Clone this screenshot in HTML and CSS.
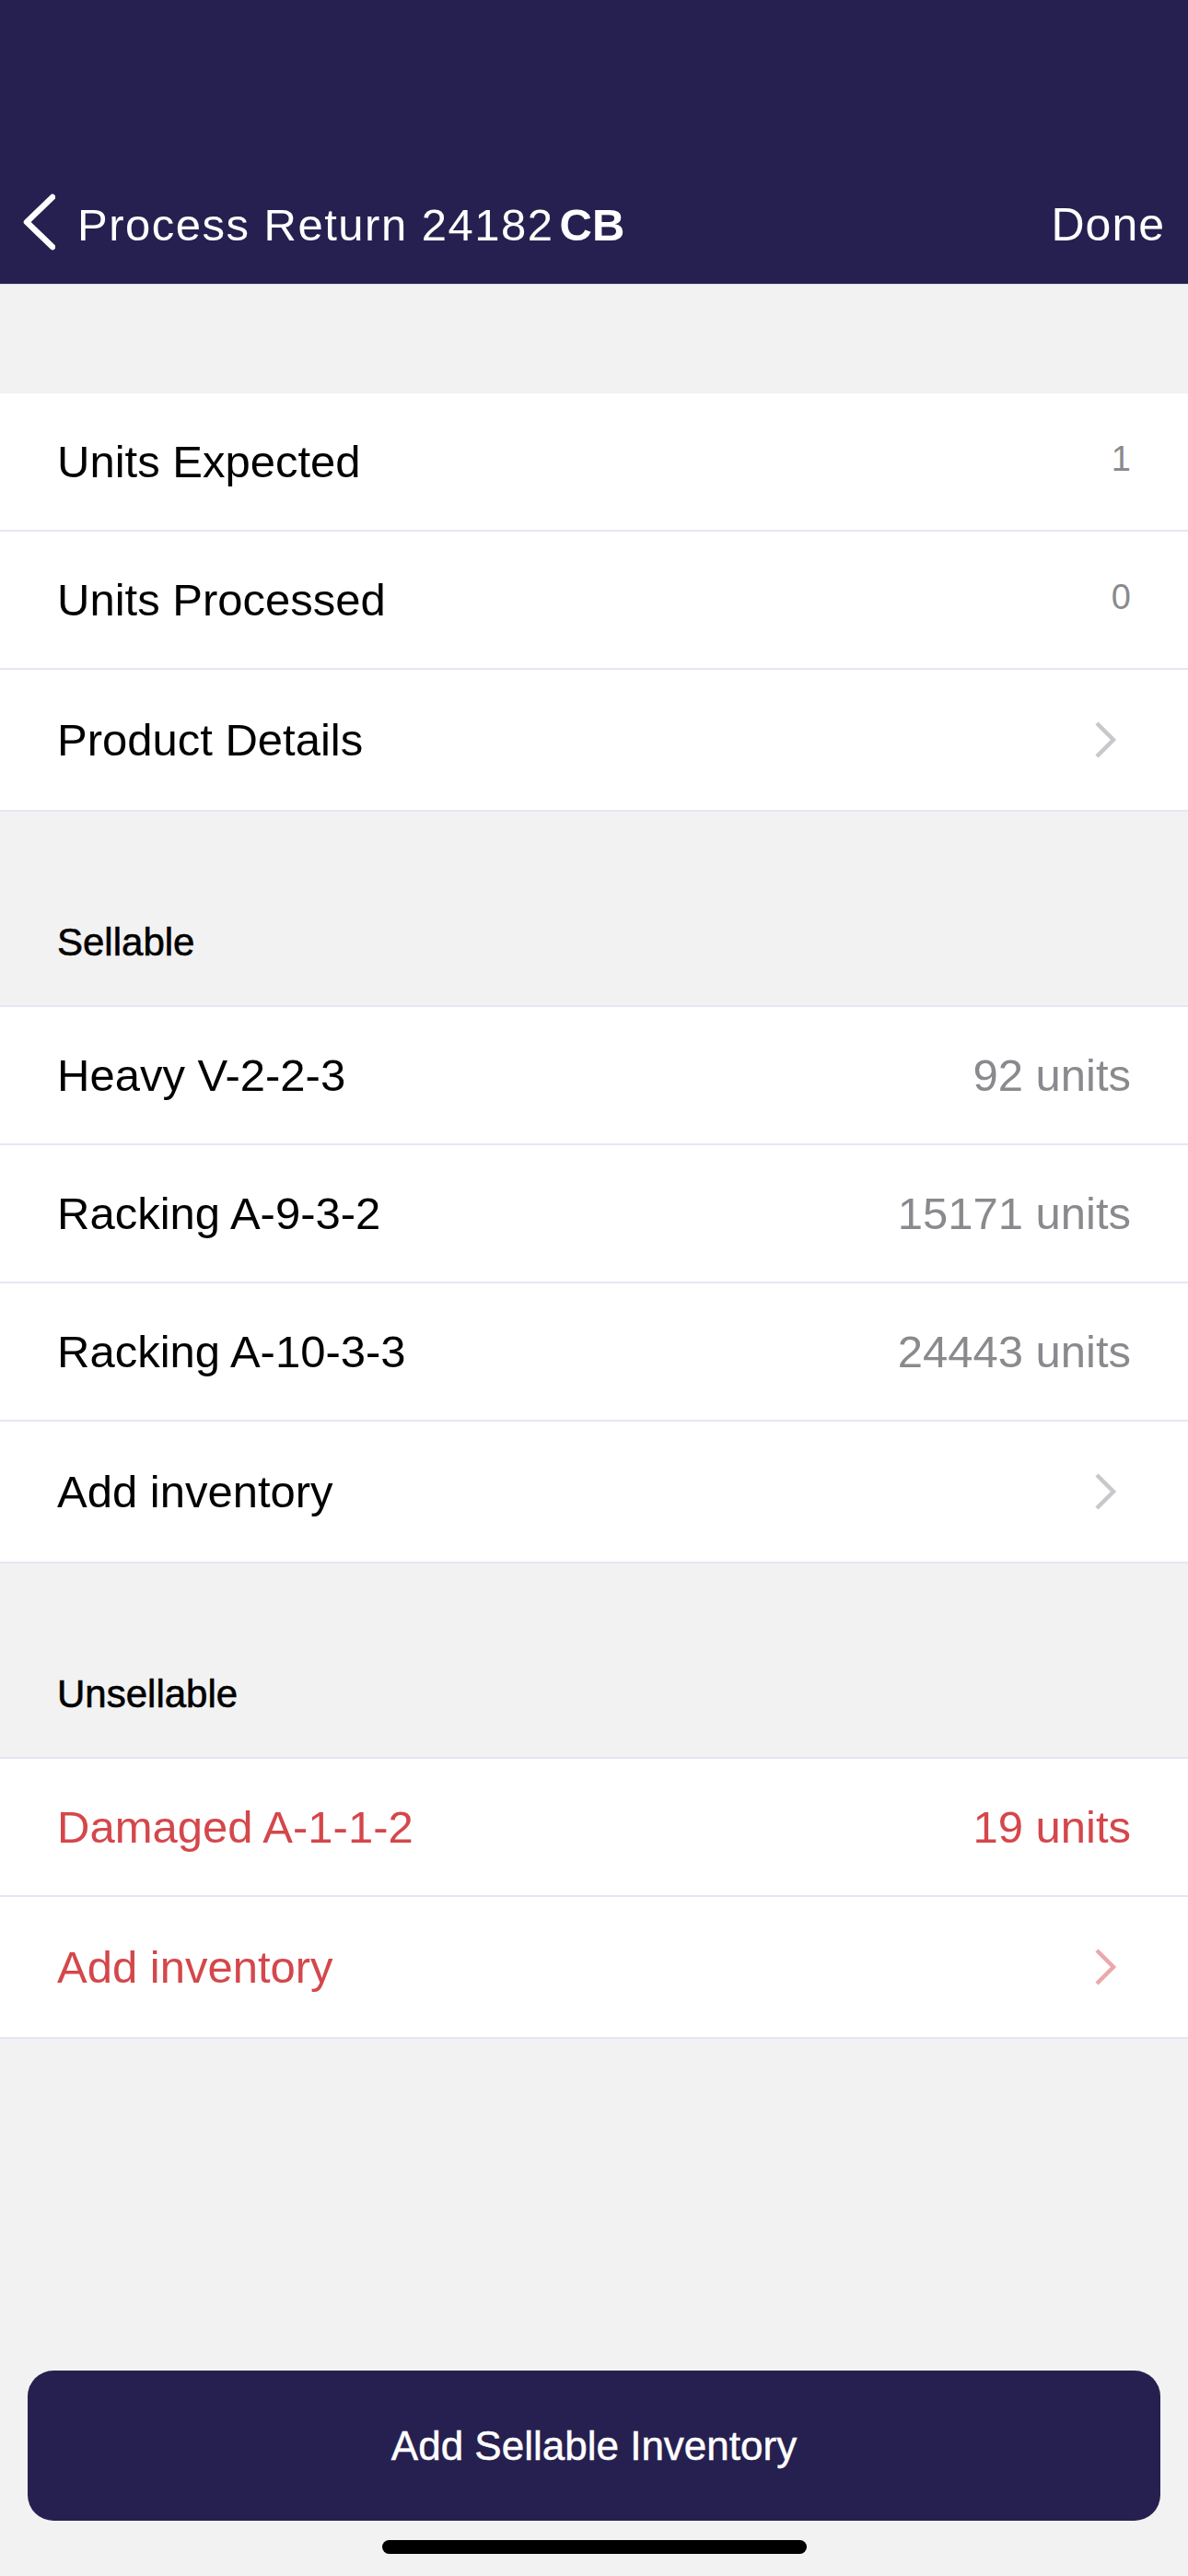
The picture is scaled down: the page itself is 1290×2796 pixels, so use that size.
FILE: index.html
```html
<!DOCTYPE html>
<html lang="en">
<head>
<meta charset="utf-8">
<title>Process Return 24182CB</title>
<link rel="stylesheet" href="styles.css">
</head>
<body>
<div class="screen">
  <header class="navbar">
    <div class="nav-left">
      <svg class="back" width="40" height="70" viewBox="0 0 40 70" aria-hidden="true">
        <path d="M37 5 L9 32 L37 59" fill="none" stroke="#fff" stroke-width="6.5" stroke-linecap="round" stroke-linejoin="round"/>
      </svg>
      <span class="nav-title">Process Return 24182<b class="nav-bold">CB</b></span>
    </div>
    <span class="nav-done">Done</span>
  </header>

  <div class="spacer-top"></div>

  <section class="group">
    <div class="row"><span class="label">Units Expected</span><span class="count">1</span></div>
    <div class="row"><span class="label">Units Processed</span><span class="count">0</span></div>
    <div class="row row-link"><span class="label">Product Details</span>
      <svg class="chev" width="26" height="42" viewBox="0 0 26 42"><path d="M4 3 L22 21 L4 39" fill="none" stroke="#c7c7cc" stroke-width="4.5"/></svg>
    </div>
  </section>

  <div class="section-head">Sellable</div>
  <section class="group">
    <div class="row"><span class="label">Heavy V-2-2-3</span><span class="qty">92 units</span></div>
    <div class="row"><span class="label">Racking A-9-3-2</span><span class="qty">15171 units</span></div>
    <div class="row"><span class="label">Racking A-10-3-3</span><span class="qty">24443 units</span></div>
    <div class="row row-link"><span class="label">Add inventory</span>
      <svg class="chev" width="26" height="42" viewBox="0 0 26 42"><path d="M4 3 L22 21 L4 39" fill="none" stroke="#c7c7cc" stroke-width="4.5"/></svg>
    </div>
  </section>

  <div class="section-head">Unsellable</div>
  <section class="group">
    <div class="row danger"><span class="label">Damaged A-1-1-2</span><span class="qty">19 units</span></div>
    <div class="row row-link danger"><span class="label">Add inventory</span>
      <svg class="chev" width="26" height="42" viewBox="0 0 26 42"><path d="M4 3 L22 21 L4 39" fill="none" stroke="#eba8aa" stroke-width="4.5"/></svg>
    </div>
  </section>

  <div class="fill"></div>

  <footer class="footer">
    <button class="primary">Add Sellable Inventory</button>
    <div class="home-indicator"></div>
  </footer>
</div>
</body>
</html>
```
FILE: styles.css
```css
* { box-sizing: border-box; }
html, body { margin: 0; padding: 0; }
body {
  background: #f2f2f2;
  font-family: "Liberation Sans", Arial, sans-serif;
  color: #000;
}
.screen {
  width: 1290px;
  min-height: 2796px;
  display: flex;
  flex-direction: column;
  background: #f2f2f2;
}
.navbar {
  height: 309px;
  background: #262050;
  display: flex;
  align-items: flex-end;
  justify-content: space-between;
  padding: 0 25px 34px 20px;
  color: #fff;
  border-bottom: 1px solid #dcdbe6;
}
.nav-left {
  display: flex;
  align-items: center;
}
.back { display: block; margin: -5px 24px -5px 0; }
.nav-title {
  font-size: 49px;
  line-height: 60px;
  letter-spacing: 1.5px;
}
.nav-bold { font-weight: 700; margin-left: 6px; letter-spacing: 0; }
.nav-done {
  font-size: 50px;
  line-height: 60px;
  letter-spacing: 1px;
}
.spacer-top { height: 118px; }
.group {
  background: #fff;
}
.row {
  height: 150px;
  display: flex;
  align-items: center;
  justify-content: space-between;
  padding: 0 62px;
  border-bottom: 2px solid #e7e5f5;
}
.row-link { height: 154px; }
.label {
  font-size: 49px;
  line-height: 60px;
}
.count {
  font-size: 38px;
  color: #8a8a8e;
  margin-bottom: 6px;
}
.qty {
  font-size: 49px;
  line-height: 60px;
  color: #8a8a8e;
}
.chev { display: block; margin-right: 15px; }
.danger .label, .danger .qty { color: #d4474b; }
.section-head {
  height: 212px;
  padding: 117px 62px 0;
  font-size: 42px;
  line-height: 50px;
  -webkit-text-stroke: 0.6px #000;
  border-bottom: 2px solid #e7e5f5;
}
.fill { flex: 1; }
.footer {
  display: flex;
  flex-direction: column;
  align-items: center;
  padding: 0 30px 24px;
}
.primary {
  width: 100%;
  height: 163px;
  border: none;
  border-radius: 28px;
  background: #262050;
  color: #fff;
  font-family: "Liberation Sans", Arial, sans-serif;
  font-size: 44px;
  -webkit-text-stroke: 0.5px #fff;
  padding: 0;
}
.home-indicator {
  width: 461px;
  height: 15px;
  margin-top: 21px;
  border-radius: 8px;
  background: #000;
}
```
